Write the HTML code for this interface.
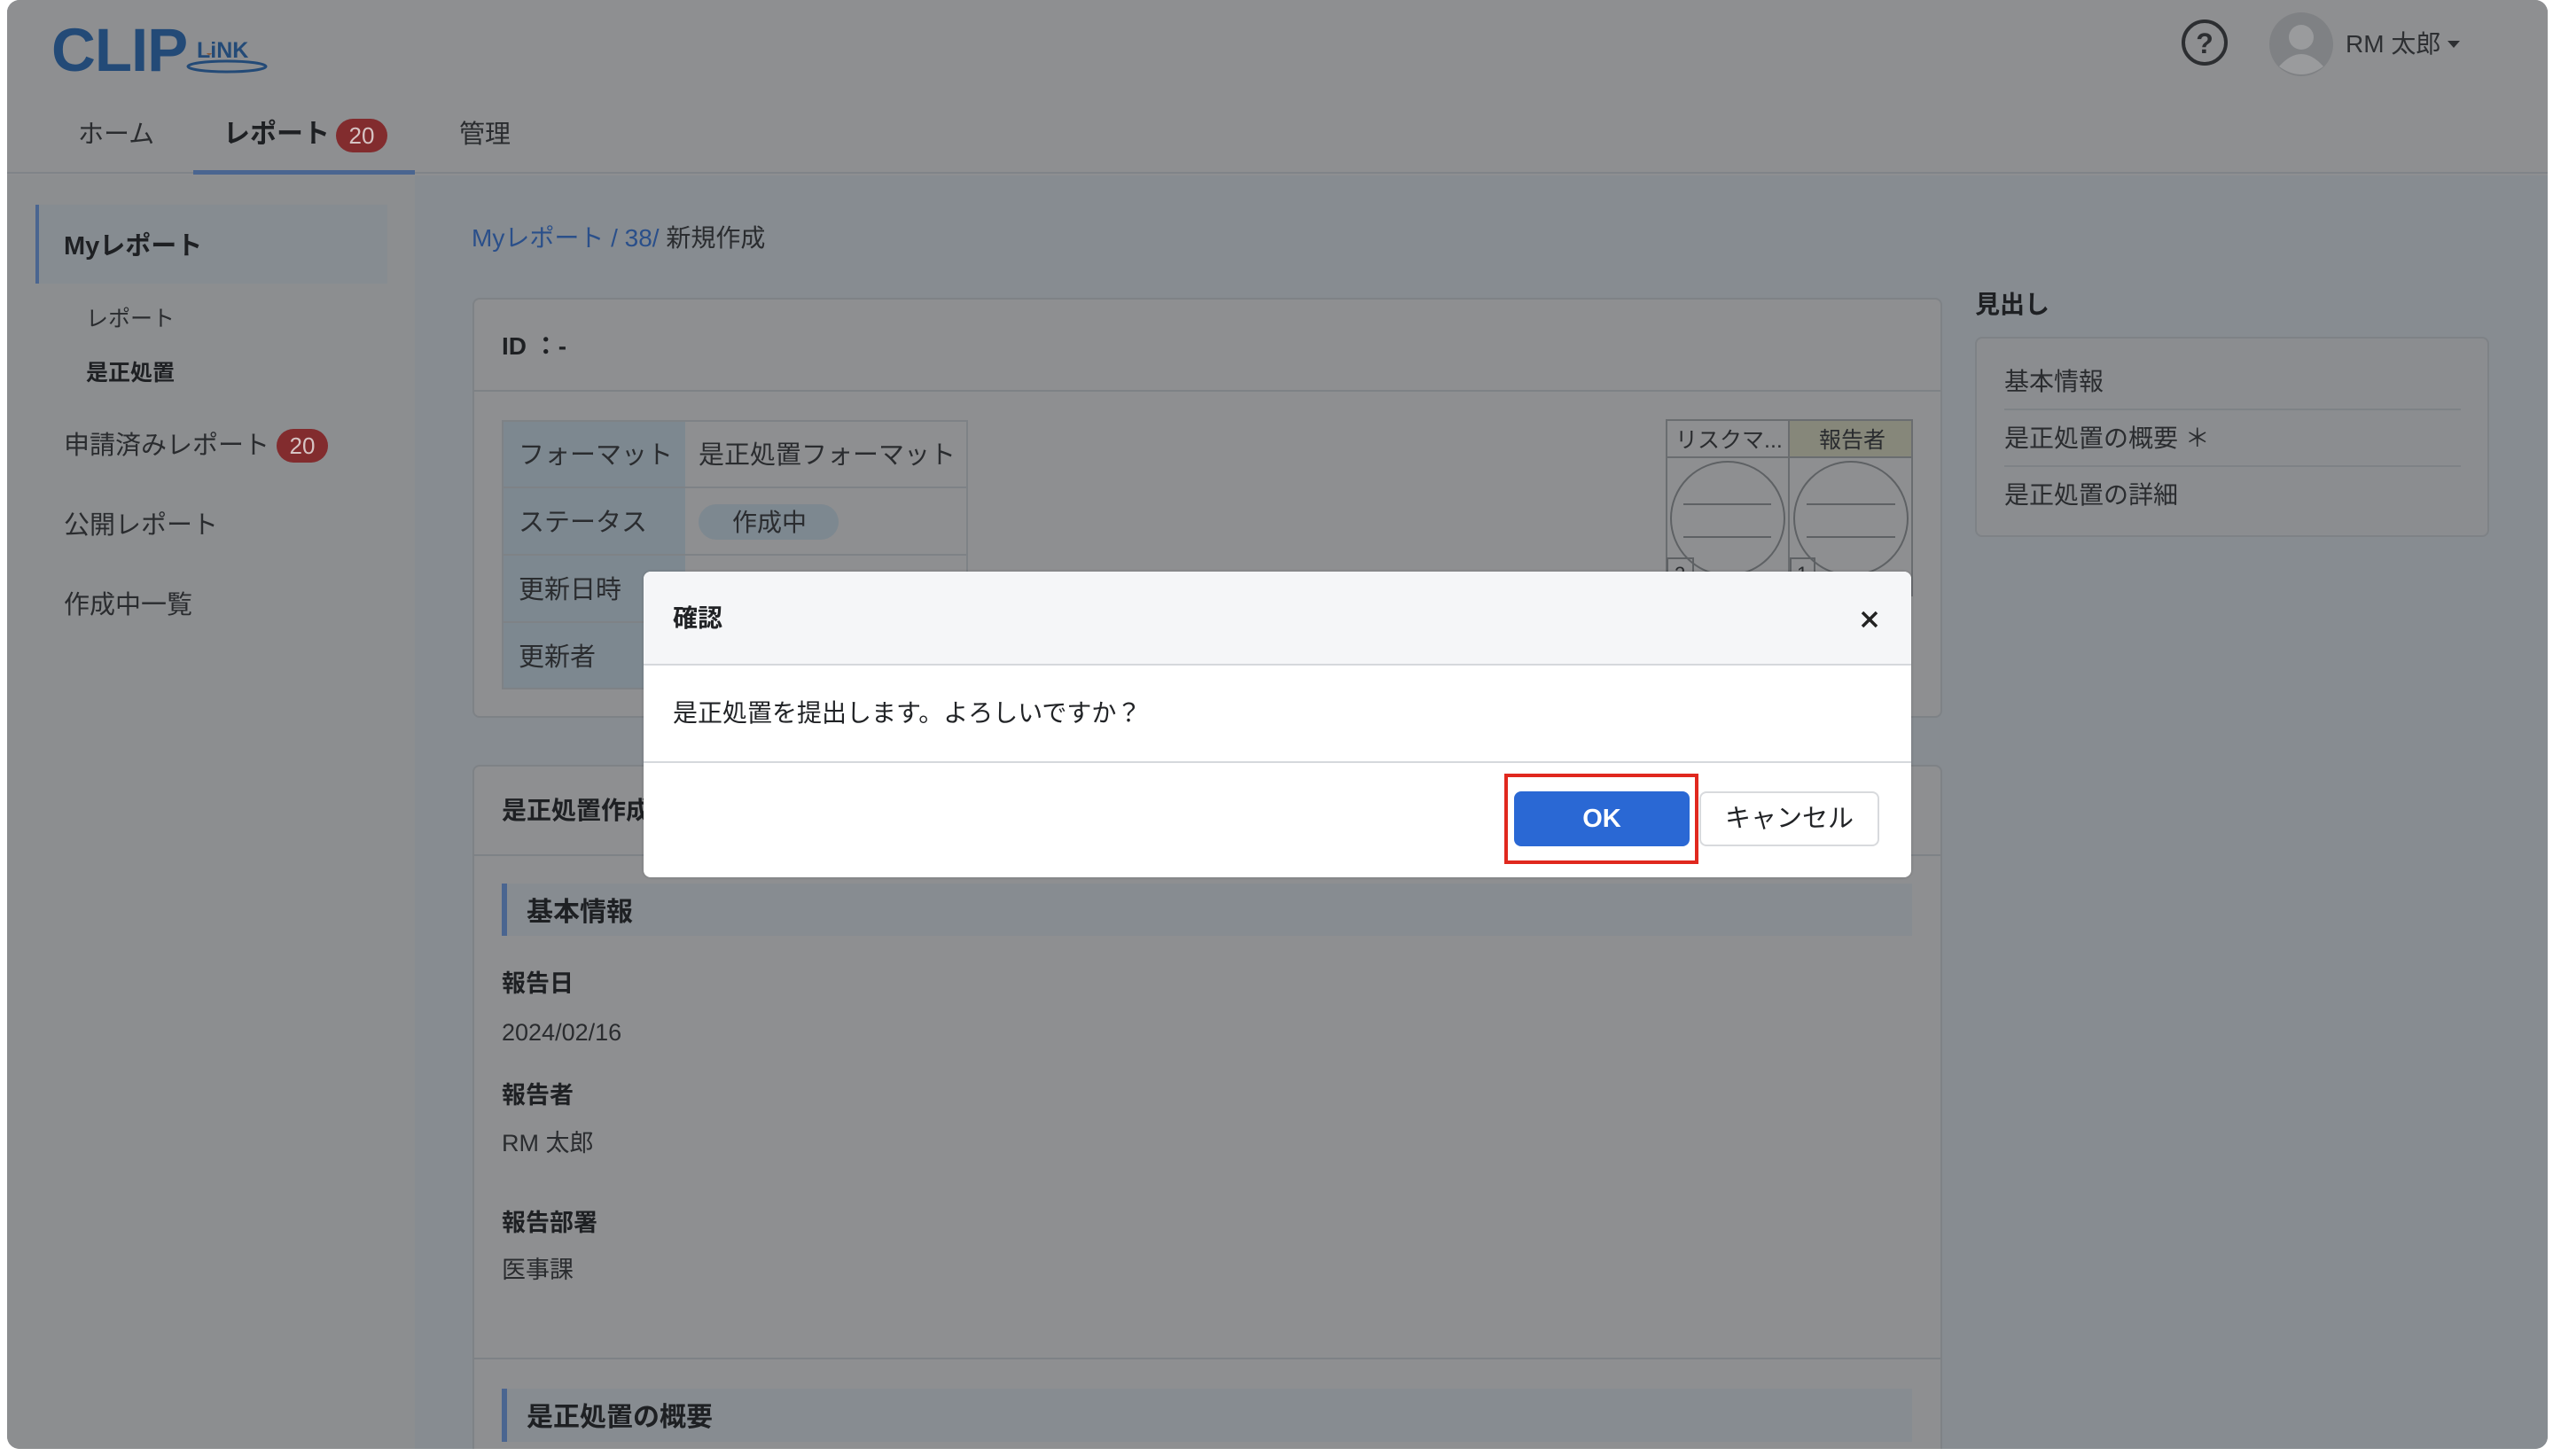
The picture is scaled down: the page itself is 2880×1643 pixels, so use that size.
<!DOCTYPE html>
<html><head><meta charset="utf-8">
<style>
*{margin:0;padding:0;box-sizing:border-box}
body{width:2880px;height:1643px;background:#fff;position:relative;overflow:hidden;font-family:"Liberation Sans","Noto Sans CJK JP",sans-serif;color:#2a2c2f}
.a{position:absolute}
.frame{left:8px;top:0;width:2866px;height:1635px;background:#8e8f91;border-radius:14px;overflow:hidden}
.t{position:absolute;white-space:nowrap;line-height:1}
.frame .t{margin-top:3px}
</style></head><body>
<div class="a frame">
 <div class="a" style="left:0;top:0;width:2866px;height:196px;background:#8e8f91;border-bottom:2px solid #808488"></div>
 <div class="t" style="left:50px;top:19px;font-size:69px;font-weight:bold;color:#234a77;letter-spacing:-1px">CLIP</div>
 <div class="t" style="left:214px;top:42px;font-size:25px;font-weight:bold;color:#234a77">LiNK</div>
 <svg class="a" style="left:198px;top:60px" width="100" height="26"><ellipse cx="50" cy="15" rx="44" ry="6" fill="none" stroke="#234a77" stroke-width="3"/><circle cx="30" cy="-1" r="3" fill="#8a5a3a"/></svg>
 <div class="t" style="left:80px;top:135px;font-size:29px;color:#2a2c2f">ホーム</div>
 <div class="t" style="left:244px;top:134px;font-size:30px;font-weight:bold;color:#1e2023">レポート</div>
 <div class="a" style="left:371px;top:134px;width:58px;height:38px;border-radius:19px;background:#822c2e;color:#d6c4c4;font-size:26px;text-align:center;line-height:38px">20</div>
 <div class="t" style="left:510px;top:135px;font-size:29px;color:#2a2c2f">管理</div>
 <div class="a" style="left:210px;top:192px;width:250px;height:5px;background:#4a6590"></div>
 <svg class="a" style="left:2451px;top:20px" width="56" height="56"><circle cx="28" cy="28" r="24" fill="none" stroke="#2c2e31" stroke-width="4"/><text x="28" y="40" font-size="32" font-weight="bold" text-anchor="middle" fill="#2c2e31" font-family="Liberation Sans">?</text></svg>
 <svg class="a" style="left:2551px;top:13px" width="74" height="74"><circle cx="37" cy="37" r="36" fill="#7f8184"/><circle cx="37" cy="29" r="14" fill="#9a9b9d"/><path d="M12 62 Q37 34 62 62 Q37 80 12 62Z" fill="#9a9b9d"/></svg>
 <div class="t" style="left:2638px;top:33px;font-size:28px;color:#2d2f32">RM 太郎</div>
 <svg class="a" style="left:2753px;top:46px" width="16" height="10"><path d="M0 0H14L7 8Z" fill="#2d2f32"/></svg>

 <div class="a" style="left:0;top:198px;width:460px;height:1437px;background:#8c8e90"></div>
 <div class="a" style="left:32px;top:231px;width:397px;height:89px;background:#868c91;border-left:4px solid #4a6590"></div>
 <div class="t" style="left:64px;top:261px;font-size:29px;font-weight:bold;color:#1e2023">Myレポート</div>
 <div class="t" style="left:89px;top:345px;font-size:25px;color:#2a2c2f">レポート</div>
 <div class="t" style="left:89px;top:406px;font-size:25px;font-weight:bold;color:#1e2023">是正処置</div>
 <div class="t" style="left:64px;top:486px;font-size:29px;color:#2a2c2f">申請済みレポート</div>
 <div class="a" style="left:304px;top:484px;width:58px;height:38px;border-radius:19px;background:#822c2e;color:#d6c4c4;font-size:26px;text-align:center;line-height:38px">20</div>
 <div class="t" style="left:64px;top:576px;font-size:29px;color:#2a2c2f">公開レポート</div>
 <div class="t" style="left:64px;top:666px;font-size:29px;color:#2a2c2f">作成中一覧</div>

 <div class="a" style="left:460px;top:198px;width:2406px;height:1437px;background:#878c91"></div>
 <div class="t" style="left:524px;top:252px;font-size:28px;color:#2a4f8a">Myレポート / 38/ <span style="color:#2a2c2f">新規作成</span></div>

 <div class="a" style="left:525px;top:336px;width:1658px;height:474px;background:#8e8f91;border:2px solid #7e8286;border-radius:8px"></div>
 <div class="a" style="left:525px;top:440px;width:1658px;height:2px;background:#7e8286"></div>
 <div class="t" style="left:558px;top:374px;font-size:28px;font-weight:bold;color:#1e2023">ID ：-</div>
 <div class="a" style="left:558px;top:474px;width:526px;height:304px;border:2px solid #7e8286;background:#8e8f91"></div>
 <div class="a" style="left:560px;top:476px;width:205px;height:300px;background:#7d8890"></div>
 <div class="a" style="left:558px;top:549px;width:526px;height:2px;background:#7e8286"></div>
 <div class="a" style="left:558px;top:625px;width:526px;height:2px;background:#7e8286"></div>
 <div class="a" style="left:558px;top:701px;width:526px;height:2px;background:#7e8286"></div>
 <div class="t" style="left:577px;top:497px;font-size:29px">フォーマット</div>
 <div class="t" style="left:780px;top:497px;font-size:29px">是正処置フォーマット</div>
 <div class="t" style="left:577px;top:573px;font-size:29px">ステータス</div>
 <div class="a" style="left:780px;top:569px;width:158px;height:40px;border-radius:20px;background:#7d8890"></div>
 <div class="t" style="left:818px;top:573px;font-size:28px">作成中</div>
 <div class="t" style="left:577px;top:649px;font-size:29px">更新日時</div>
 <div class="t" style="left:577px;top:725px;font-size:29px">更新者</div>
 <div class="a" style="left:1871px;top:473px;width:279px;height:200px;border:2px solid #6a6d70"></div>
 <div class="a" style="left:2010px;top:475px;width:138px;height:41px;background:#86877a"></div>
 <div class="a" style="left:1871px;top:515px;width:279px;height:2px;background:#6a6d70"></div>
 <div class="a" style="left:2009px;top:473px;width:2px;height:200px;background:#6a6d70"></div>
 <div class="t" style="left:1882px;top:482px;font-size:25px">リスクマ...</div>
 <div class="t" style="left:2044px;top:482px;font-size:25px">報告者</div>
 <svg class="a" style="left:1871px;top:515px" width="279" height="140"><g fill="none" stroke="#5e6164" stroke-width="2"><circle cx="70" cy="70" r="64"/><circle cx="209" cy="70" r="64"/><path d="M20 54H119M20 91H119M159 54H259M159 91H259"/><rect x="2" y="115" width="29" height="25"/><rect x="141" y="115" width="27" height="25"/></g><text x="10" y="140" font-size="22" fill="#2a2c2f">2</text><text x="148" y="140" font-size="22" fill="#2a2c2f">1</text></svg>

 <div class="a" style="left:525px;top:863px;width:1658px;height:800px;background:#8e8f91;border:2px solid #7e8286;border-radius:8px"></div>
 <div class="a" style="left:525px;top:964px;width:1658px;height:2px;background:#7e8286"></div>
 <div class="t" style="left:558px;top:898px;font-size:28px;font-weight:bold;color:#1e2023">是正処置作成</div>
 <div class="a" style="left:558px;top:997px;width:1591px;height:59px;background:#878c91;border-left:6px solid #4a6590"></div>
 <div class="t" style="left:586px;top:1012px;font-size:30px;font-weight:bold;color:#1e2023">基本情報</div>
 <div class="t" style="left:558px;top:1094px;font-size:27px;font-weight:bold;color:#1e2023">報告日</div>
 <div class="t" style="left:558px;top:1149px;font-size:27px">2024/02/16</div>
 <div class="t" style="left:558px;top:1220px;font-size:27px;font-weight:bold;color:#1e2023">報告者</div>
 <div class="t" style="left:558px;top:1274px;font-size:27px">RM 太郎</div>
 <div class="t" style="left:558px;top:1364px;font-size:27px;font-weight:bold;color:#1e2023">報告部署</div>
 <div class="t" style="left:558px;top:1417px;font-size:27px">医事課</div>
 <div class="a" style="left:525px;top:1532px;width:1658px;height:2px;background:#7e8286"></div>
 <div class="a" style="left:558px;top:1567px;width:1591px;height:60px;background:#878c91;border-left:6px solid #4a6590"></div>
 <div class="t" style="left:586px;top:1582px;font-size:30px;font-weight:bold;color:#1e2023">是正処置の概要</div>

 <div class="t" style="left:2220px;top:327px;font-size:28px;font-weight:bold;color:#1e2023">見出し</div>
 <div class="a" style="left:2220px;top:380px;width:580px;height:226px;border:2px solid #7e8286;border-radius:8px;background:#8b8d90"></div>
 <div class="t" style="left:2253px;top:414px;font-size:28px">基本情報</div>
 <div class="a" style="left:2253px;top:461px;width:515px;height:2px;background:#7e8286"></div>
 <div class="t" style="left:2253px;top:478px;font-size:28px">是正処置の概要 ＊</div>
 <div class="a" style="left:2253px;top:525px;width:515px;height:2px;background:#7e8286"></div>
 <div class="t" style="left:2253px;top:542px;font-size:28px">是正処置の詳細</div>
</div>

<div class="a" style="left:726px;top:645px;width:1430px;height:345px;background:#fff;border-radius:8px;overflow:hidden;box-shadow:0 0 3px rgba(0,0,0,.2)">
 <div class="a" style="left:0;top:0;width:1430px;height:106px;background:#f5f6f8;border-bottom:2px solid #d5d8dc"></div>
 <div class="t" style="left:33px;top:39px;font-size:28px;font-weight:bold;color:#212326">確認</div>
 <svg class="a" style="left:1373px;top:44px" width="20" height="20"><path d="M2 2L18 18M18 2L2 18" stroke="#222" stroke-width="3.5"/></svg>
 <div class="t" style="left:33px;top:146px;font-size:28px;color:#212326">是正処置を提出します。よろしいですか？</div>
 <div class="a" style="left:0;top:214px;width:1430px;height:2px;background:#d5d8dc"></div>
 <div class="a" style="left:971px;top:228px;width:219px;height:102px;border:4px solid #e0281e"></div>
 <div class="a" style="left:982px;top:248px;width:198px;height:62px;background:#2a68d4;border-radius:8px;color:#fff;font-size:29px;font-weight:bold;text-align:center;line-height:62px">OK</div>
 <div class="a" style="left:1191px;top:248px;width:203px;height:62px;background:#fff;border:2px solid #d8dadd;border-radius:8px;color:#212326;font-size:29px;text-align:center;line-height:58px">キャンセル</div>
</div>
</body></html>
